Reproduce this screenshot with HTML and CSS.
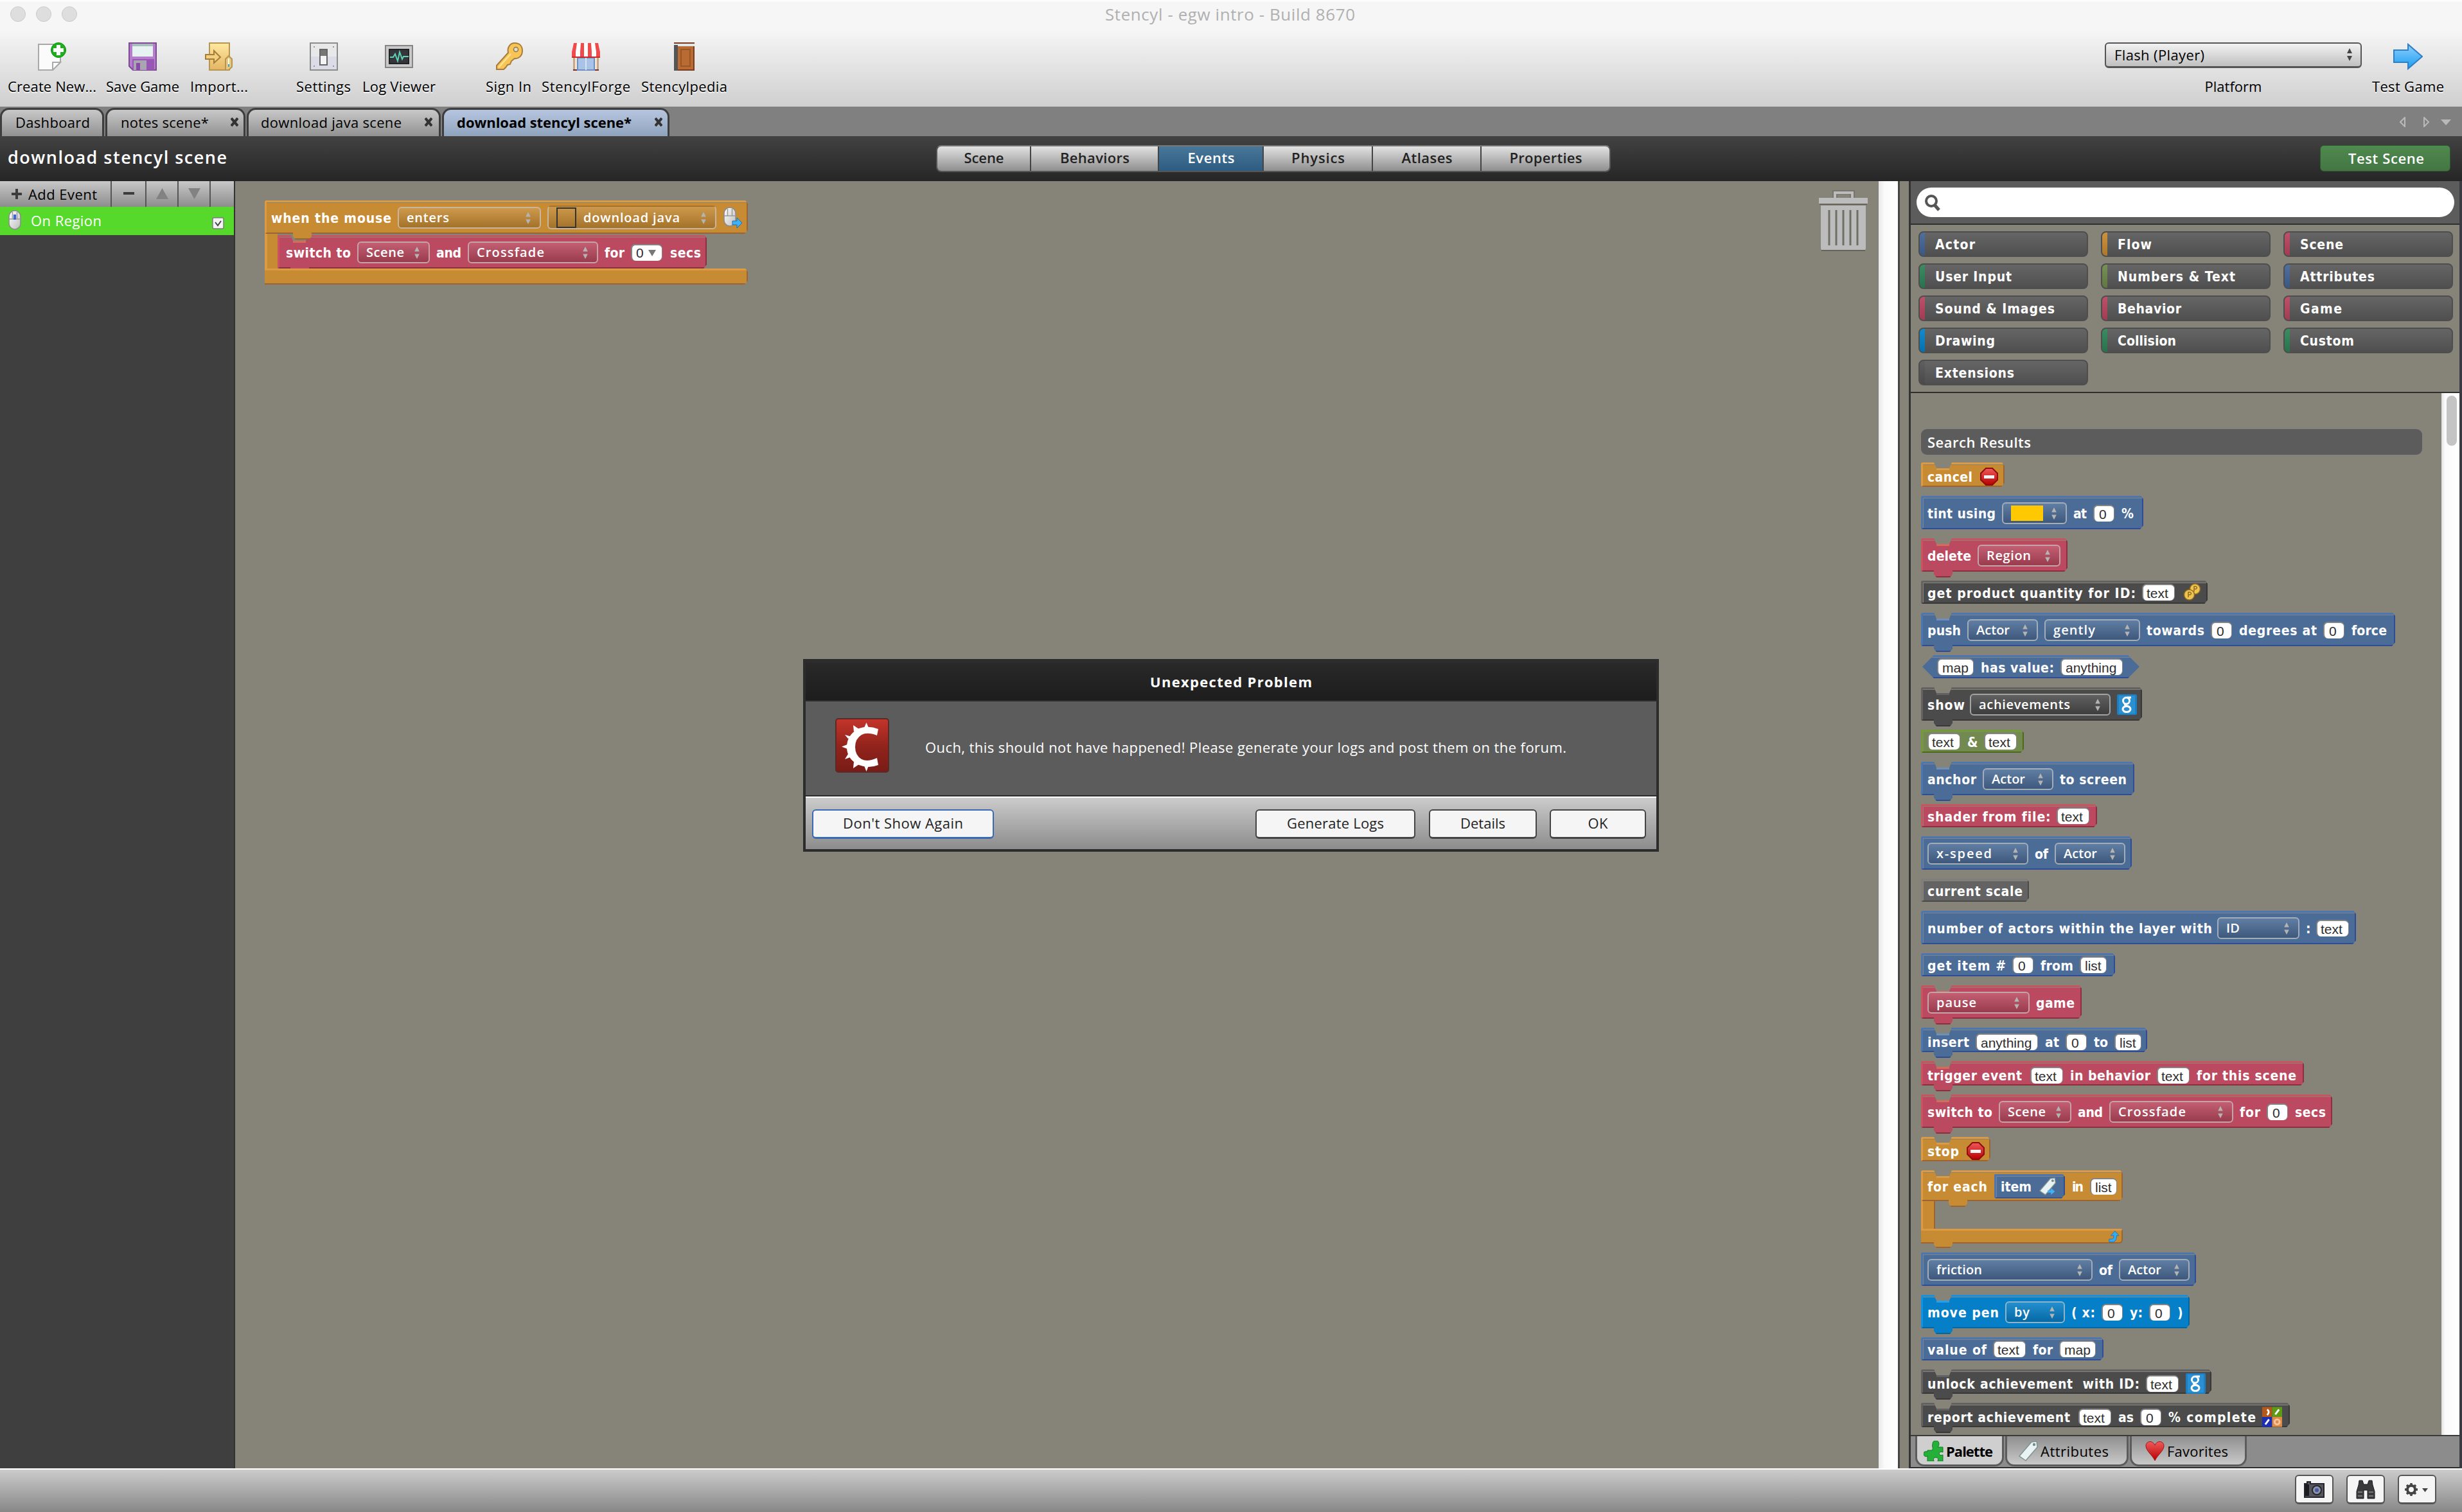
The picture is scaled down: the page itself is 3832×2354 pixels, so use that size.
FILE: index.html
```html
<!DOCTYPE html>
<html lang="en">
<head>
<meta charset="utf-8">
<title>Stencyl - egw intro - Build 8670</title>
<link rel="stylesheet" href="styles.css">
</head>
<body>
<svg width="0" height="0" class="defs">
  <defs>
    <linearGradient id="gBlue" x1="0" y1="0" x2="0" y2="1"><stop offset="0" stop-color="#8fd0ff"/><stop offset="1" stop-color="#1a9df0"/></linearGradient>
    <linearGradient id="gGold" x1="0" y1="0" x2="0" y2="1"><stop offset="0" stop-color="#ffe9a0"/><stop offset="1" stop-color="#e3b562"/></linearGradient>
    <linearGradient id="gRed" x1="0" y1="0" x2="0" y2="1"><stop offset="0" stop-color="#ef5a5a"/><stop offset="1" stop-color="#b80000"/></linearGradient>
    <linearGradient id="gLogo" x1="0" y1="0" x2="0" y2="1"><stop offset="0" stop-color="#c4352b"/><stop offset=".5" stop-color="#92241c"/><stop offset="1" stop-color="#791c16"/></linearGradient>
    <linearGradient id="gMouse" x1="0" y1="0" x2="1" y2="1"><stop offset="0" stop-color="#fff"/><stop offset="1" stop-color="#bdbdbd"/></linearGradient>
    <symbol id="spin" viewBox="0 0 8 20"><path d="M0 8 4 0 8 8zM0 12 4 20 8 12z" fill="currentColor"/></symbol>
    <symbol id="stopsign" viewBox="0 0 28 28"><path d="M9 1h10l8 8v10l-8 8H9l-8-8V9z" fill="url(#gRed)" stroke="#8f0d0d" stroke-width="2"/><path d="M6 12h16v5H6z" fill="#f4f4f4"/></symbol>
    <symbol id="tag" viewBox="0 0 30 32"><path d="M20 2 28 1 29 10 11 31 1 24z" fill="#e9f3f3" stroke="#7e9292" stroke-width="1.5"/><circle cx="24" cy="6" r="2.2" fill="#7b8888"/></symbol>
    <symbol id="gplay" viewBox="0 0 31 32"><rect width="31" height="32" rx="2" fill="#1d7fc0"/><path d="M3 2h25v28H3z" fill="#2b90d2"/><g fill="none" stroke="#fff" stroke-width="3"><ellipse cx="14.500" cy="10" rx="5" ry="5"/><ellipse cx="15" cy="23" rx="6" ry="4.500"/><path d="M16 5h6M13 15c-3 3 5 2 6 5"/></g></symbol>
    <symbol id="mouse" viewBox="0 0 20 32"><rect x="1" y="1" width="18" height="29" rx="9" fill="url(#gMouse)" stroke="#8a8a8a" stroke-width="1.500"/><path d="M1 14h18M6.500 3v11M13.500 3v11" stroke="#9a9a9a" stroke-width="1.500" fill="none"/></symbol>
  </defs>
</svg>

<header class="head">
  <div class="titlebar"><span class="light"></span><span class="light"></span><span class="light"></span><span class="wtitle" data-w="389">Stencyl - egw intro - Build 8670</span></div>
  <div class="toolbar">
    <div class="tool"><svg viewBox="0 0 44 44"><path d="M1 3h34v28L23 43H1z" fill="#fbfbfb" stroke="#a9a9a9" stroke-width="2"/><path d="M23 43V31h12z" fill="#fff" stroke="#a9a9a9" stroke-width="2"/><circle cx="32" cy="12" r="11.500" fill="#1fae1f" stroke="#0c8f0c"/><path d="M29 4h6v5h5v6h-5v5h-6v-5h-5V9h5z" fill="#fff"/></svg><span data-w="138">Create New...</span></div>
    <div class="tool g15"><svg viewBox="0 0 44 44"><path d="M1 1h42v42H7l-6-6z" fill="#b57fcb" stroke="#7d4a94" stroke-width="2"/><path d="M6 2h32v20H6z" fill="#e6f3f2"/><path d="M6 2h32v4H6z" fill="#a9bdbd"/><path d="M6 26h34v17H6z" fill="#9857b5"/><path d="M8 28h20v15H8z" fill="#aaa5b2"/><path d="M12 32h6v11h-6z" fill="#8a4aa8"/></svg><span data-w="114">Save Game</span></div>
    <div class="tool g17"><svg viewBox="0 0 44 44"><path d="M7 1h31v42H7z" fill="url(#gGold)" stroke="#b9964f" stroke-width="2"/><path d="M1 19h13v-6l10 10-10 9v-6H1z" fill="#f3cf80" stroke="#a67c3b" stroke-width="2"/><path d="M32 43V26l5-5 5 5v12l-5 5z" fill="#e9c77e" stroke="#b9964f" stroke-width="2"/><path d="M36 25h2v9h-2z" fill="#fff"/><path d="M36 34h2v4h-2z" fill="#29a6e8"/></svg><span data-w="90">Import...</span></div>
    <div class="tool g75"><svg viewBox="0 0 44 44"><path d="M1 1h42v42H1z" fill="#dcdce6" stroke="#8c8c8c" stroke-width="2"/><path d="M2 2h40v20H2z" fill="#e8e8e8"/><g fill="#999"><path d="M6 6h2v2H6zM36 6h2v2h-2zM6 36h2v2H6zM36 36h2v2h-2z"/></g><path d="M18 12h10v23H18z" fill="#aaa"/><path d="M16 11h11v24H16z" fill="#f5f5f5" stroke="#666" stroke-width="2"/><path d="M17 12h9v9h-9z" fill="#777"/></svg><span data-w="85">Settings</span></div>
    <div class="tool g18"><svg viewBox="0 0 44 44"><path d="M1 5h42v34H1z" fill="#c9c9c9" stroke="#858585" stroke-width="2"/><path d="M7 11h30v22H7z" fill="#34363b" stroke="#222" stroke-width="2"/><path d="M8 23h5l3-5 4 11 3-14 4 11 2-4h8" fill="none" stroke="#5fd3b5" stroke-width="2"/></svg><span data-w="114">Log Viewer</span></div>
    <div class="tool g78"><svg viewBox="0 0 44 44"><path d="M20 16c-2-8 3-15 10-15 8 0 12 5 12 12 0 8-6 13-12 12l-5 4-2 5-4 1-3 4-3 3H2v-6z" transform="translate(1 0)" fill="#f6c556" stroke="#a77b3d" stroke-width="2"/><circle cx="33" cy="11" r="3.500" fill="#ddd" stroke="#99763d" stroke-width="1.500"/><path d="M6 39 25 18" stroke="#ffe49b" stroke-width="2"/></svg><span data-w="71">Sign In</span></div>
    <div class="tool g16"><svg viewBox="0 0 44 44"><path d="M2 22h40v21H2z" fill="#f1e5d5"/><path d="M2 24h3v19H2zM39 24h3v19h-3z" fill="#c7a785"/><path d="M9 24h26v19H9z" fill="#a9c3e6" stroke="#6b8fc0" stroke-width="2"/><path d="M21 24h2v19h-2z" fill="#d5e3f5"/><path d="M2 42h6v2H2zM36 42h6v2h-6z" fill="#7a2b2b"/><path d="M3 1h38l3 14v9H0v-9z" fill="#fff"/><path d="M3 1h5L6 15v9H0v-9zM14 1h5v23h-6V15zM25 1h5l1 14v9h-6zM36 1h5l3 14v9h-6v-9z" fill="#f04a4a"/><path d="M0 22h44v2H0z" fill="#c92b2b"/></svg><span data-w="138">StencylForge</span></div>
    <div class="tool g17"><svg viewBox="0 0 44 44"><path d="M6 0h32v44H6z" fill="#7a3c1e"/><path d="M6 2h32v4H6z" fill="#dfe8e6"/><path d="M12 6h24v36H12z" fill="#b86b33"/><path d="M6 4h6v40H6z" fill="#555"/><path d="M17 11h14v26H17z" fill="none" stroke="#9a5526" stroke-width="2"/></svg><span data-w="134">Stencylpedia</span></div>
    <div class="platform"><div class="combo"><span data-w="140">Flash (Player)</span><svg viewBox="0 0 8 20"><use href="#spin"/></svg></div><span data-w="89">Platform</span></div>
    <div class="tool testgame"><svg viewBox="0 0 46 42"><path d="M1 11h22V2l22 19-22 19V30H1z" fill="url(#gBlue)" stroke="#2f7fc6" stroke-width="2"/></svg><span data-w="112">Test Game</span></div>
  </div>
</header>

<nav class="tabs">
  <div class="tab t1"><span data-w="116">Dashboard</span></div>
  <div class="tab t2"><span data-w="137">notes scene*</span><svg viewBox="0 0 12 14"><path d="m1 1 10 12M11 1 1 13"/></svg></div>
  <div class="tab t3"><span data-w="219">download java scene</span><svg viewBox="0 0 12 14"><path d="m1 1 10 12M11 1 1 13"/></svg></div>
  <div class="tab t4 on"><span data-w="272">download stencyl scene*</span><svg viewBox="0 0 12 14"><path d="m1 1 10 12M11 1 1 13"/></svg></div>
  <svg class="tabnav" viewBox="0 0 80 16"><path d="M8 1v14L1 8zM38 1v14l7-7z" fill="none" stroke="#b9b9b9" stroke-width="2"/><path d="M64 4h16l-8 9z" fill="#b9b9b9"/></svg>
</nav>

<div class="scenebar">
  <span class="scenename" data-w="341">download stencyl scene</span>
  <div class="segs">
    <div class="s1"><span data-w="62">Scene</span></div><div class="s2"><span data-w="108">Behaviors</span></div><div class="s3 on"><span data-w="73">Events</span></div><div class="s4"><span data-w="83">Physics</span></div><div class="s5"><span data-w="79">Atlases</span></div><div class="s6"><span data-w="113">Properties</span></div>
  </div>
  <div class="testscene"><span data-w="118">Test Scene</span></div>
</div>

<main class="work">
  <aside class="events">
    <div class="evbar">
      <div class="c1"><svg width="16" height="16" viewBox="0 0 16 16"><path d="M6 0h4v6h6v4h-6v6H6v-6H0V6h6z" fill="#3c3c3c"/></svg><span data-w="107">Add Event</span></div>
      <div class="c2"><svg width="17" height="5" viewBox="0 0 17 5"><path d="M0 0h17v4H0z" fill="#3c3c3c"/></svg></div>
      <div class="c3"><svg width="19" height="17" viewBox="0 0 19 17"><path d="M9.500 0 19 17H0z" fill="#828282"/></svg></div>
      <div class="c3"><svg width="19" height="17" viewBox="0 0 19 17"><path d="M0 0h19L9.500 17z" fill="#828282"/></svg></div>
    </div>
    <div class="evrow"><svg width="20" height="32"><use href="#mouse"/><path d="M8 7h4v8H8z" fill="#3f64d8"/></svg><span data-w="110">On Region</span><svg class="chk" width="19" height="19" viewBox="0 0 19 19"><rect x="1" y="1" width="17" height="17" rx="2" fill="#f3f3f3" stroke="#7d7d7d" stroke-width="1.500"/><path d="m5 8 4 5 5-7" fill="none" stroke="#444" stroke-width="2"/></svg></div>
  </aside>

  <section class="canvas">
    <div class="wrap orange">
      <div class="blk cap h52">
        <b data-w="187">when the mouse</b>
        <span class="dd w224"><i data-w="66">enters</i><svg><use href="#spin"/></svg></span>
        <span class="dd region"><em class="box"></em><i data-w="150">download java</i><svg><use href="#spin"/></svg></span>
        <svg class="ic m" viewBox="0 0 30 34"><use href="#mouse" width="20" height="32"/><path d="M14 22h7v-5l8 8-8 8v-5h-7z" fill="#3fb2f5" stroke="#1a6fb0"/></svg>
      </div>
      <div class="inner">
        <div class="blk red cmd h52">
          <b data-w="101">switch to</b><span class="dd w113"><i data-w="59">Scene</i><svg><use href="#spin"/></svg></span><b data-w="39">and</b><span class="dd w203"><i data-w="105">Crossfade</i><svg><use href="#spin"/></svg></span><b data-w="31">for</b><span class="in combo0">0<svg viewBox="0 0 12 10"><path d="M0 0h12L6 10z" fill="#777"/></svg></span><b data-w="48">secs</b>
        </div>
      </div>
      <div class="foot"></div>
    </div>
    <svg class="trash" viewBox="0 0 76 96"><path d="M25 14V3h27v11" fill="none" stroke="#77766b" stroke-width="8"/><path d="M25 14V4h27v10" fill="none" stroke="#bcbcbc" stroke-width="4"/><path d="M0 12h76v9H0z" fill="#bcbcbc"/><path d="M1 21h74v2H1z" fill="#66655c"/><path d="M3 24h70v66q0 4-4 4H7q-4 0-4-4z" fill="#bcbcbc"/><path d="M4 94h68" stroke="#66655c" stroke-width="2"/><path d="M16 31v55M27 31v55M38 31v55M49 31v55M60 31v55" stroke="#6f6f66" stroke-width="3"/></svg>
  </section>
  <div class="vscroll"></div>
  <div class="gutter"></div>

  <aside class="panel">
    <div class="search"><div class="field"><svg viewBox="0 0 26 28"><circle cx="11" cy="11" r="8" fill="none" stroke="#555" stroke-width="4"/><path d="m16 17 7 8" stroke="#555" stroke-width="5"/></svg></div></div>
    <div class="cats">
      <div class="cat a-blue"><span data-w="62">Actor</span></div><div class="cat a-orange"><span data-w="53">Flow</span></div><div class="cat a-red"><span data-w="67">Scene</span></div>
      <div class="cat a-green"><span data-w="119">User Input</span></div><div class="cat a-olive"><span data-w="183">Numbers &amp; Text</span></div><div class="cat a-blue"><span data-w="116">Attributes</span></div>
      <div class="cat a-red"><span data-w="186">Sound &amp; Images</span></div><div class="cat a-red"><span data-w="99">Behavior</span></div><div class="cat a-red"><span data-w="65">Game</span></div>
      <div class="cat a-cyan"><span data-w="93">Drawing</span></div><div class="cat a-green"><span data-w="91">Collision</span></div><div class="cat a-green"><span data-w="84">Custom</span></div>
      <div class="cat a-gray"><span data-w="123">Extensions</span></div>
    </div>
    <div class="palette">
      <div class="list">
        <div class="results"><span data-w="161">Search Results</span></div>
        <div class="blk orange cmd end h38" style="width:130px"><b data-w="70">cancel</b><svg class="ic"><use href="#stopsign"/></svg></div>
        <div class="blk blue rep h52" style="width:346px"><b data-w="106">tint using</b><span class="dd" style="width:101px"><em class="yellow"></em><svg><use href="#spin"/></svg></span><b data-w="21">at</b><span class="in">0</span><b data-w="22">%</b></div>
        <div class="blk red cmd h52" style="width:228px"><b data-w="68">delete</b><span class="dd" style="width:129px"><i data-w="69">Region</i><svg><use href="#spin"/></svg></span></div>
        <div class="blk dark rep h36" style="width:446px"><b data-w="324">get product quantity for ID:</b><span class="in t">text</span><svg class="ic" viewBox="0 0 28 28"><g fill="#f0c452" stroke="#8f6a1f" stroke-width="1.500"><circle cx="18.500" cy="9" r="8"/><circle cx="9.500" cy="18" r="8"/></g><path d="M8 22v-8h3q3 2 0 4H8M17 13V5h3q3 2 0 4h-3" fill="none" stroke="#8f6a1f" stroke-width="1.500"/></svg></div>
        <div class="blk blue cmd h52" style="width:738px"><b data-w="52">push</b><span class="dd w110"><i data-w="52">Actor</i><svg><use href="#spin"/></svg></span><span class="dd" style="width:149px"><i data-w="65">gently</i><svg><use href="#spin"/></svg></span><b data-w="90">towards</b><span class="in">0</span><b data-w="121">degrees at</b><span class="in">0</span><b data-w="55">force</b></div>
        <div class="blk blue hex h36" style="width:338px"><span class="in m57">map</span><b data-w="114">has value:</b><span class="in any">anything</span></div>
        <div class="blk dark cmd h52" style="width:344px"><b data-w="58">show</b><span class="dd near" style="width:219px"><i data-w="142">achievements</i><svg><use href="#spin"/></svg></span><svg class="g"><use href="#gplay"/></svg></div>
        <div class="blk olive rep h36" style="width:160px"><span class="in t">text</span><b data-w="16">&amp;</b><span class="in t">text</span></div>
        <div class="blk blue cmd h52" style="width:332px"><b data-w="76">anchor</b><span class="dd w110"><i data-w="52">Actor</i><svg><use href="#spin"/></svg></span><b data-w="104">to screen</b></div>
        <div class="blk red rep h36" style="width:274px"><b data-w="191">shader from file:</b><span class="in t">text</span></div>
        <div class="blk blue rep h52" style="width:328px"><span class="dd" style="width:157px"><i data-w="86">x-speed</i><svg><use href="#spin"/></svg></span><b data-w="21">of</b><span class="dd w110"><i data-w="52">Actor</i><svg><use href="#spin"/></svg></span></div>
        <div class="blk gray rep h36" style="width:168px"><b data-w="148">current scale</b></div>
        <div class="blk blue rep h52" style="width:677px"><b data-w="443">number of actors within the layer with</b><span class="dd near" style="width:128px"><i data-w="21">ID</i><svg><use href="#spin"/></svg></span><b data-w="6">:</b><span class="in t">text</span></div>
        <div class="blk blue rep h36" style="width:302px"><b data-w="122">get item #</b><span class="in">0</span><b data-w="51">from</b><span class="in l">list</span></div>
        <div class="blk red cmd h52" style="width:250px"><span class="dd" style="width:159px"><i data-w="62">pause</i><svg><use href="#spin"/></svg></span><b data-w="60">game</b></div>
        <div class="blk blue cmd h38" style="width:352px"><b data-w="65">insert</b><span class="in any">anything</span><b data-w="22">at</b><span class="in">0</span><b data-w="22">to</b><span class="in l">list</span></div>
        <div class="blk red cmd h38" style="width:596px"><b data-w="147">trigger event</b><span class="in t tw">text</span><b data-w="125">in behavior</b><span class="in t">text</span><b data-w="155">for this scene</b></div>
        <div class="blk red cmd h52" style="width:640px"><b data-w="101">switch to</b><span class="dd w113"><i data-w="59">Scene</i><svg><use href="#spin"/></svg></span><b data-w="39">and</b><span class="dd" style="width:193px"><i data-w="105">Crossfade</i><svg><use href="#spin"/></svg></span><b data-w="32">for</b><span class="in">0</span><b data-w="48">secs</b></div>
        <div class="blk orange cmd end h38" style="width:108px"><b data-w="49">stop</b><svg class="ic"><use href="#stopsign"/></svg></div>
        <div class="loop orange">
          <div class="blk cmd h48"><b data-w="93">for each</b><div class="blk blue rep h38 item"><b data-w="48">item</b><svg class="ic" viewBox="0 0 30 32"><use href="#tag"/><path d="M15 23h6v-4l7 6-7 6v-4h-6z" fill="#3fb2f5"/></svg></div><b data-w="18">in</b><span class="in l">list</span></div>
          <div class="foot"><svg viewBox="0 0 20 20"><path d="M2 19v-5h5q3 0 3-6H5l7-8 7 8h-4q0 11-7 11z" fill="#35abf2" stroke="#1d74b8"/></svg></div>
        </div>
        <div class="blk blue rep h52" style="width:428px"><span class="dd" style="width:257px"><i data-w="71">friction</i><svg><use href="#spin"/></svg></span><b data-w="21">of</b><span class="dd w110"><i data-w="52">Actor</i><svg><use href="#spin"/></svg></span></div>
        <div class="blk cyan cmd h52" style="width:418px"><b data-w="111">move pen</b><span class="dd" style="width:93px"><i data-w="24">by</i><svg><use href="#spin"/></svg></span><b data-w="37">( x:</b><span class="in">0</span><b data-w="20">y:</b><span class="in">0</span><b data-w="8">)</b></div>
        <div class="blk blue rep h36" style="width:284px"><b data-w="92">value of</b><span class="in t">text</span><b data-w="31">for</b><span class="in m57">map</span></div>
        <div class="blk dark cmd h38" style="width:452px"><b data-w="330">unlock achievement &nbsp;with ID:</b><span class="in t">text</span><svg class="g"><use href="#gplay"/></svg></div>
        <div class="blk dark cmd h38" style="width:574px"><b data-w="222">report achievement</b><span class="in t tw">text</span><b data-w="24">as</b><span class="in">0</span><b data-w="136">% complete</b><svg class="g" viewBox="0 0 32 32"><path d="M0 0h16v16H0z" fill="#b5581b"/><path d="M16 0h16v16H16z" fill="#5f9a16"/><path d="M0 16h16v16H0z" fill="#1a2fb4"/><path d="M16 16h16v16H16z" fill="#e08a48"/><g stroke="#fff" stroke-width="3" fill="none"><path d="M8 4q5 4 0 9M21 12l6-8M5 28l6-8"/><circle cx="24" cy="24" r="4" stroke="#f5c49a"/></g></svg></div>
      </div>
      <div class="pscroll"><div></div></div>
    </div>
    <div class="ptabs">
      <div class="p1 on"><svg viewBox="0 0 32 32"><path d="M6 15h7q2-2 1-5-1-2 0-5 0-5 5-5t5 5q0 3-2 5h8v8q-5-2-6 2 1 4 6 2v10h-8q2-6-3-6t-3 6H6v-8q-5 2-6-3t6-4z" fill="#25b03a" stroke="#0d7a1f"/></svg><span data-w="73">Palette</span></div>
      <div class="p2"><svg viewBox="0 0 30 32"><use href="#tag"/></svg><span data-w="106">Attributes</span></div>
      <div class="p3"><svg viewBox="0 0 30 32"><path d="M15 31C11 22 1 16 1 8c0-8 11-9 14-1 3-8 14-7 14 1 0 8-10 14-14 23z" fill="url(#gRed)" stroke="#9d1414"/></svg><span data-w="95">Favorites</span></div>
    </div>
  </aside>
</main>

<footer class="status">
  <div class="btn"><svg viewBox="0 0 32 26"><path d="M1 4h4V1h5v3h21v21H1z" fill="#55565f" stroke="#25262b" stroke-width="2"/><path d="M2 5h6v18H2z" fill="#1c1c20"/><circle cx="20" cy="14" r="7" fill="#8e93a5" stroke="#26272c" stroke-width="2"/><circle cx="20" cy="14" r="3" fill="#3b59a8"/></svg></div>
  <div class="btn"><svg viewBox="0 0 30 30"><path d="M5 1h5l2 6h6l2-6h5l1 7 3 10v11H18V16h-6v13H1V18L4 8z" fill="#3a3a3c" stroke="#1d1d1e"/><path d="M3 19h7M20 19h7M3 25h7M20 25h7" stroke="#77777a" stroke-width="2"/></svg></div>
  <div class="btn gear"><svg viewBox="0 0 38 22"><circle cx="10" cy="11" r="6" fill="none" stroke="#444" stroke-width="4"/><path d="M10 1v4M10 17v4M0 11h4M16 11h4M3 4l3 3M14 15l3 3M17 4l-3 3M6 15l-3 3" stroke="#444" stroke-width="3.500"/><path d="M27 9h9l-4.500 6z" fill="#444"/></svg></div>
</footer>

<div class="dialog">
  <div class="dtitle"><span data-w="252">Unexpected Problem</span></div>
  <div class="dbody">
    <svg viewBox="0 0 84 86"><rect x="1" y="1" width="82" height="83" rx="4" fill="url(#gLogo)" stroke="#5a2a27" stroke-width="2"/><path d="M67 17 65 27Q50 21 41 26 31 32 31 45 31 58 41 64 50 69 65 62L67 73Q52 79 37 73 18 64 18 45 18 26 37 16 52 11 67 17z" fill="#fff"/><path d="m45 15 3.500-8L52 15zM29 21 28 11l9 6zM20 32l-5-6 11 3zM19 41l-9 3.500L19 48zM20 56l-5 8 11-4zM29 68l-1 10 9-6zM45 74l3.500 9L52 74z" fill="#fff"/></svg>
    <span data-w="998">Ouch, this should not have happened! Please generate your logs and post them on the forum.</span>
  </div>
  <div class="dfoot">
    <div class="dbtn focus b1"><span data-w="187">Don't Show Again</span></div>
    <div class="dbtn b2"><span data-w="151">Generate Logs</span></div>
    <div class="dbtn b3"><span data-w="70">Details</span></div>
    <div class="dbtn b4"><span data-w="31">OK</span></div>
  </div>
</div>
<script src="fit.js"></script>
</body>
</html>
```
FILE: fit.js
```js
document.querySelectorAll('[data-w]').forEach(function (el) {
  var target = parseFloat(el.dataset.w);
  var natural = el.getBoundingClientRect().width;
  var gaps = Math.max(1, el.textContent.length - 1);
  el.style.letterSpacing = ((target - natural) / gaps).toFixed(3) + 'px';
  el.style.width = target + 'px';
});
```
FILE: styles.css
```css
* { box-sizing: border-box; }
html, body { margin: 0; width: 3832px; height: 2354px; overflow: hidden; }
body { font: 22px/30px "Open Sans", "Noto Sans", sans-serif; color: #000; display: flex; flex-direction: column; background: #868478; position: relative; }
svg { display: block; flex: none; }
.defs { position: absolute; }
[data-w] { display: inline-block; white-space: nowrap; flex: none; }

.head { height: 166px; background: linear-gradient(#fff 0, #f6f6f6 4px, #f6f6f6 46px, #cfcfcf); }
.titlebar { height: 44px; display: flex; align-items: center; padding-left: 16px; }
.light { width: 24px; height: 24px; border-radius: 50%; background: #dedede; border: 1.500px solid #cacaca; margin-right: 16px; }
.wtitle { font-size: 26px; color: #b0b0b0; margin-left: 1584px; margin-top: -1px; }
.toolbar { display: flex; padding: 22px 0 0 12px; }
.tool { display: flex; flex-direction: column; align-items: center; gap: 9px; text-shadow: 0 2px 0 #f4f4f4; }
.tool svg { width: 44px; height: 44px; }
.tool span { height: 30px; }
.g15 { margin-left: 15px; } .g16 { margin-left: 16px; } .g17 { margin-left: 17px; } .g18 { margin-left: 18px; } .g75 { margin-left: 75px; } .g78 { margin-left: 78px; }
.platform { margin-left: auto; width: 400px; display: flex; flex-direction: column; align-items: center; gap: 13px; }
.combo { width: 400px; height: 40px; border: 2px solid #555; border-bottom-width: 3px; border-radius: 6px; background: linear-gradient(#f2f2f2, #c0c0c0); display: flex; align-items: center; justify-content: space-between; padding: 0 12px 1px 13px; }
.combo svg { width: 10px; height: 20px; color: #444; }
.testgame { margin: 0 28px 0 16px; }
.testgame svg { width: 46px; }

.tabs { height: 46px; background: #808080; display: flex; align-items: flex-end; gap: 2px; padding-left: 0; }
.tab { height: 44px; border: 3px solid #3d3d3d; border-bottom: 0; border-radius: 14px 14px 0 0; background: linear-gradient(#c8c8c8, #919191); display: flex; align-items: center; padding: 0 8px 4px 21px; justify-content: space-between; }
.tab svg { width: 12px; height: 14px; stroke: #333; stroke-width: 4; fill: none; }
.t1 { width: 162px; } .t2 { width: 218px; } .t3 { width: 302px; padding-right: 10px; padding-left: 19px; } .t4 { width: 354px; padding-left: 20px; }
.tab.on { background: linear-gradient(#b7c6e0, #8fa3bd); font-weight: 700; }
.tabnav { width: 80px; height: 16px; margin: 0 17px 14px auto; }

.scenebar { height: 70px; background: linear-gradient(#424242, #262626); display: flex; align-items: center; padding-left: 12px; color: #fff; font-weight: 600; }
.scenename { font-size: 27px; margin-top: -4px; }
.segs { display: flex; margin-left: 1104px; height: 42px; border: 2px solid #555; border-top-color: #777; border-radius: 8px; overflow: hidden; color: #222; margin-top: -1px; }
.segs div { display: flex; align-items: center; justify-content: center; background: linear-gradient(#e2e2e2, #8f8f8f); border-right: 2px solid #444; padding: 0 0 3px 1px; }
.segs div:last-child { border: 0; }
.segs div.on { background: linear-gradient(#49779a, #2c5c80); color: #fff; }
.segs .s1 { width: 146px; } .segs .s2 { width: 199px; } .segs .s3 { width: 163px; } .segs .s4 { width: 170px; } .segs .s5 { width: 169px; } .segs .s6 { width: 199px; }
.testscene { margin: -1px 18px 0 auto; width: 203px; height: 41px; border-radius: 6px; background: linear-gradient(#4f8a4f, #437543); border: 1px solid #2f5a2f; display: flex; align-items: center; padding: 0 0 2px 43px; }

.work { height: 2004px; display: flex; }
.events { width: 366px; background: #3f3f3f; border-right: 2px solid #333; }
.evbar { height: 40px; display: flex; background: linear-gradient(#c8c8c8, #8d8d8d); }
.evbar div { border-right: 2px solid #555; display: flex; align-items: center; justify-content: center; padding-bottom: 1px; }
.evbar .c1 { width: 174px; justify-content: flex-start; padding-left: 18px; gap: 10px; }
.evbar .c2 { width: 54px; } .evbar .c3 { width: 50px; }
.evrow { height: 44px; background: #57d92b; color: #fff; display: flex; align-items: center; padding: 0 0 2px 13px; gap: 15px; }
.evrow .chk { margin-left: 157px; margin-top: 8px; }

.canvas { width: 2558px; background: #868478; display: flex; justify-content: space-between; align-items: flex-start; padding: 14px 17px 0 46px; }
.trash { width: 76px; height: 96px; }
.vscroll { width: 30px; background: linear-gradient(90deg, #e8e8e8, #fafafa 30%, #fff); }
.gutter { width: 20px; border-left: 3px solid #444; border-right: 3px solid #333; background: #868478; }

.panel { width: 858px; display: flex; flex-direction: column; background: #868478; border-right: 4px solid #3a3a42; }
.search { height: 68px; background: #5c5c5c; border-bottom: 2px solid #2e2e2e; padding: 10px 8px 0 9px; flex: none; }
.field { height: 46px; border-radius: 23px; background: #fff; padding: 10px 12px; }
.field svg { width: 26px; height: 28px; }
.cats { height: 262px; flex: none; border-bottom: 2px solid #2e2e2e; padding: 10px 0 0 12px; display: grid; grid-template-columns: repeat(3, 264px); grid-auto-rows: 40px; gap: 10px 20px; align-content: start; }
.cat { border: 2px solid #4e4e4e; border-radius: 8px; background: linear-gradient(rgba(255,255,255,.06), rgba(0,0,0,.14)), linear-gradient(90deg, var(--a) 8px, #5c5c5c 8px); color: #fff; font: 700 21px/24px "DejaVu Sans Condensed", "DejaVu Sans", sans-serif; font-stretch: condensed; display: flex; align-items: center; padding: 2px 0 0 24px; }
.a-blue { --a: #446698; } .a-orange { --a: #c98b32; } .a-red { --a: #bb4560; } .a-green { --a: #2f8558; } .a-olive { --a: #6f8a4b; } .a-cyan { --a: #0583cb; } .a-gray { --a: #555; }

.palette { height: 1622px; flex: none; display: flex; overflow: hidden; }
.list { width: 826px; padding: 56px 0 0 16px; display: flex; flex-direction: column; align-items: flex-start; gap: 14px; }
.results { width: 780px; height: 40px; border-radius: 9px; background: #5c5c5c; color: #fff; padding: 5px 0 0 10px; margin-bottom: -2px; font-weight: 600; font-size: 22px; flex: none; }
.pscroll { width: 28px; background: linear-gradient(90deg, #e2e2e2, #fafafa 20%, #fff); padding: 4px 0 0 8px; }
.pscroll div { width: 16px; height: 78px; border-radius: 8px; background: #c4c4c4; }
.ptabs { height: 52px; flex: none; border-top: 2px solid #3a3a3a; border-bottom: 2px solid #2e2e2e; background: #8c8c8c; display: flex; padding-left: 7px; gap: 2px; }
.ptabs div { height: 47px; border: 3px solid #5c5c5c; border-top: 0; border-radius: 0 0 14px 14px; background: linear-gradient(#8f8f8f, #c9c9c9); display: flex; align-items: center; gap: 3px; padding-top: 2px; }
.ptabs svg { width: 32px; height: 32px; }
.ptabs .on { background: #cfcfcf; font-weight: 700; }
.ptabs .p1 { width: 138px; padding-left: 10px; } .ptabs .p2 { width: 192px; padding-left: 17px; } .ptabs .p3 { width: 182px; padding-left: 20px; }

/* script blocks */
.blue { --c: #4b6c97; --t: #4b76b5; --h: #6c90bd; --d: #2f4c96; }
.red { --c: #bb495f; --t: #cc5260; --h: #d96a58; --d: #8c3040; }
.orange { --c: #c78b33; --t: #dc9a42; --h: #dc9a42; --d: #9a6530; }
.dark { --c: #4b4b4b; --t: #626262; --h: #626262; --d: #383838; }
.gray { --c: #636363; --t: #7e7e7e; --h: #7e7e7e; --d: #4a4a4a; }
.olive { --c: #728a50; --t: #719c31; --h: #719c31; --d: #4c6a16; }
.cyan { --c: #0580c8; --t: #1392e2; --h: #1fa0f0; --d: #04659f; }
.blk { position: relative; z-index: 0; display: flex; align-items: center; gap: 10px; padding-left: 10px; color: #fff; flex: none; }
.blk::before { content: ""; position: absolute; z-index: -1; inset: 0; background: var(--c); border: solid; border-width: 3px 2px 2px 3px; border-color: var(--t) var(--d) var(--d) var(--t); box-shadow: inset 0 1px 0 #868478; }
.rep::before { box-shadow: inset 1px 1px 0 #868478; }
.rep::before, .cap::before { clip-path: polygon(2px 0, calc(100% - 4px) 0, 100% 5px, 100% calc(100% - 6px), calc(100% - 5px) 100%, 2px 100%, 0 calc(100% - 2px), 0 2px); }
.cmd::before { background: linear-gradient(var(--h), var(--h)) 21px 6px / 20px 3px no-repeat var(--c); clip-path: polygon(2px 0, 20px 0, 24px 9px, 44px 9px, 48px 0, calc(100% - 4px) 0, 100% 5px, 100% calc(100% - 6px), calc(100% - 5px) 100%, 2px 100%, 0 calc(100% - 2px), 0 2px); }
.cmd::after, .wrap .cap::after, .loop .cmd::after, .loop > .foot::after { content: ""; position: absolute; left: 20px; top: calc(100% - 2px); width: 29px; height: 11px; background: linear-gradient(var(--c) 9px, var(--d) 9px); clip-path: polygon(0 0, 100% 0, 100% 6px, 25px 100%, 4px 100%, 0 6px); }
.end::after { display: none; }
.hex { margin-left: 2px; padding-left: 23px; }
.hex::before { border-width: 3px 0 2px; clip-path: polygon(0 50%, 18px 0, calc(100% - 18px) 0, 100% 50%, calc(100% - 18px) 100%, 18px 100%); }
.h36 { height: 36px; } .h38 { height: 38px; padding-top: 5px; } .h48 { height: 48px; padding-top: 1px; } .h52 { height: 52px; padding-top: 1px; }
.blk b { font: 700 21px/24px "DejaVu Sans Condensed", "DejaVu Sans", sans-serif; font-stretch: condensed; padding-top: 3px; white-space: nowrap; }
.dd { height: 34px; flex: none; border: 2px solid #b5b5b5; border-color: color-mix(in srgb, var(--c) 30%, #c9c9c9); border-radius: 6px; background: linear-gradient(color-mix(in srgb, var(--c) 88%, #fff), color-mix(in srgb, var(--c) 82%, #000)); display: flex; align-items: center; justify-content: space-between; padding: 0 14px 0 12px; }
.dd i { font: 600 20px/28px "Open Sans", "Noto Sans", sans-serif; font-style: normal; }
.dd svg { width: 8px; height: 19px; color: #b4b4b4; margin-top: 1px; margin-left: auto; }
.near { margin-left: -2px; }
.w110 { width: 110px; } .w113 { width: 113px; } .w203 { width: 203px; } .w224 { width: 223px; }
.in { width: 33px; height: 26px; flex: none; border-radius: 7px; background: #fff; border: 2px solid #848484; border-width: 2px 1px 0 2px; font: 21px/25px "Liberation Sans", Arial, sans-serif; color: #2e2e2e; padding-left: 7px; margin-right: 1px; white-space: nowrap; }
.in.t { width: 51px; padding-left: 5px; } .in.l { width: 42px; padding-left: 6px; } .in.m57 { width: 57px; padding-left: 6px; } .in.any { width: 97px; padding-left: 6px; }
.in.tw { margin-left: 3px; }
.ic { width: 28px; height: 28px; margin-left: 2px; }
.g { width: 31px; height: 32px; }
.yellow { width: 50px; height: 24px; background: #ffc800; }
.box { width: 31px; height: 32px; border: 2px solid #333; margin-right: 11px; }
.region { width: 263px; height: 37px; border-top-color: transparent; }
.in.combo0 { width: 49px; display: flex; align-items: center; gap: 7px; margin-right: 2px; padding-left: 6px; }
.combo0 svg { width: 12px; height: 10px; }
.ic.m { width: 30px; height: 34px; margin-left: 1px; }
.wrap { position: relative; margin-top: 16px; width: 752px; height: 131px; background: linear-gradient(90deg, var(--t) 4px, var(--c) 4px) 0 4px / 20px 125px no-repeat; }
.wrap .inner { padding: 2px 0 0 20px; }
.wrap .inner .blk { width: 668px; padding-left: 13px; }
.wrap .inner .blk::after { z-index: 2; }
.wrap .foot { width: 752px; }
.foot { position: relative; background: var(--c); border: solid var(--d); border-width: 3px 2px 2px 0; border-top-color: var(--t); height: 25px; clip-path: polygon(20px 0, calc(100% - 4px) 0, 100% 5px, 100% calc(100% - 6px), calc(100% - 5px) 100%, 0 100%, 0 0); }
.wrap .cap { z-index: 1; }
.wrap .cap::after { left: 44px; }
.loop { position: relative; width: 314px; height: 114px; flex: none; display: flex; flex-direction: column; justify-content: space-between; background: linear-gradient(90deg, var(--t) 3px, var(--c) 3px 20px, var(--d) 20px) 0 4px / 22px 108px no-repeat; }
.loop > .cmd::after { left: 43px; }
.loop .foot { height: 23px; clip-path: none; border-radius: 0 4px 6px 0; display: flex; justify-content: flex-end; padding-right: 3px; }
.loop .foot svg { width: 18px; height: 19px; }
.loop .item { width: 110px; gap: 9px; padding-top: 0; margin: 0 1px; }
.loop .item::after { display: none; }

.status { height: 68px; border-top: 2px solid #fff; background: linear-gradient(#cbcbcb, #878787); display: flex; justify-content: flex-end; gap: 20px; padding: 8px 40px 0 0; }
.btn { width: 60px; height: 46px; border: 2px solid #555; border-bottom-width: 3px; border-radius: 6px; background: #f5f5f5; display: flex; align-items: center; justify-content: center; }
.btn svg { width: 32px; height: 30px; }
.gear svg { width: 38px; }

.dialog { position: absolute; z-index: 5; left: 1250px; top: 1026px; width: 1332px; height: 300px; border: 4px solid #2c2c2c; border-width: 6px 4px 4px; background: #5c5c5c; color: #fff; display: flex; flex-direction: column; }
.dtitle { height: 60px; background: linear-gradient(#292929, #1d1d1d); border-bottom: 2px solid #2c2c2c; display: flex; align-items: center; justify-content: center; font-weight: 700; padding-bottom: 1px; }
.dbody { height: 148px; border-bottom: 2px solid #2c2c2c; display: flex; align-items: center; padding-left: 46px; gap: 56px; }
.dbody svg { width: 84px; height: 86px; margin-bottom: 8px; }
.dbody span { margin-bottom: 4px; }
.dfoot { flex: 1; border-top: 2px solid #fff; background: linear-gradient(#cbcbcb, #8c8c8c); display: flex; padding: 18px 16px 0 10px; }
.dbtn { height: 46px; border: 2px solid #444; border-bottom-width: 3px; border-radius: 6px; background: #f5f5f5; color: #222; display: flex; align-items: center; justify-content: center; padding-bottom: 3px; }
.dbtn.focus { border-color: #3a6ab5; }
.b1 { width: 283px; margin-right: auto; } .b2 { width: 249px; margin-right: 21px; } .b3 { width: 168px; margin-right: 20px; } .b4 { width: 150px; }
```
